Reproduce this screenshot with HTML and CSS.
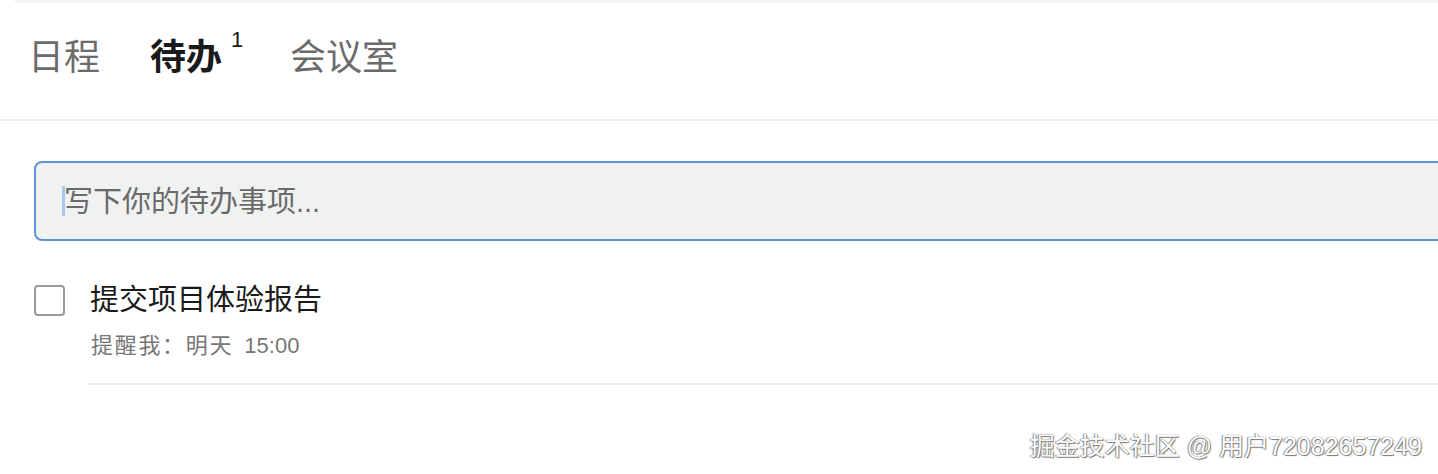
FILE: index.html
```html
<!DOCTYPE html>
<html lang="zh-CN">
<head>
<meta charset="utf-8">
<link rel="stylesheet" href="styles.css">
</head>
<body>
<div class="page">
  <div class="topbar"></div>
  <header class="tabs">
    <div class="tab">日程</div>
    <div class="tab active">待办<sup class="badge">1</sup></div>
    <div class="tab">会议室</div>
  </header>
  <main class="content">
    <div class="input-box">
      <span class="caret"></span>
      <span class="placeholder">写下你的待办事项...</span>
    </div>
    <div class="todo">
      <div class="checkbox"></div>
      <div class="todo-body">
        <div class="todo-title">提交项目体验报告</div>
        <div class="todo-sub"><span class="sub-label">提醒我：明天</span> 15:00</div>
      </div>
    </div>
  </main>
  <div class="watermark">掘金技术社区 @ 用户72082657249</div>
</div>
</body>
</html>
```
FILE: styles.css
```css
html, body {
  margin: 0;
  padding: 0;
  background: #ffffff;
}
body {
  font-family: "Liberation Sans", "Noto Sans CJK SC", sans-serif;
  overflow: hidden;
  width: 1438px;
  height: 474px;
}
.page {
  position: relative;
  width: 1438px;
  height: 474px;
  overflow: hidden;
}
.topbar {
  height: 3px;
  margin-left: 15px;
  background: #f3f3f3;
}
.tabs {
  display: flex;
  align-items: center;
  height: 116px;
  padding-left: 28px;
  border-bottom: 2px solid #ededed;
}
.tab {
  font-size: 36px;
  line-height: 44px;
  color: #6b6b6b;
  margin-right: 50px;
  position: relative;
  margin-top: -6px;
}
.tab.active {
  color: #1a1a1a;
  font-weight: 700;
  margin-right: 68px;
}
.badge {
  position: absolute;
  left: 81px;
  top: -8px;
  font-size: 22px;
  line-height: 24px;
  font-weight: 400;
  color: #1a1a1a;
  vertical-align: baseline;
}
.content {
  padding: 40px 0 0 34px;
}
.input-box {
  display: flex;
  align-items: center;
  height: 76px;
  margin-right: -30px;
  border: 2px solid #5f93d3;
  border-radius: 8px;
  background: #f0f1f1;
  padding-left: 26px;
}
.caret {
  width: 3px;
  height: 30px;
  background: #a9c6ec;
  margin-right: 0;
}
.placeholder {
  font-size: 29px;
  line-height: 36px;
  color: #6a6a6a;
  margin-top: 1px;
  margin-left: -1px;
}
.todo {
  display: flex;
  margin-top: 42px;
}
.checkbox {
  width: 27px;
  height: 27px;
  border: 2px solid #9a9a9a;
  border-radius: 4px;
  flex: none;
  margin-top: 2px;
  margin-right: 23px;
}
.todo-title {
  font-size: 29px;
  line-height: 34px;
  color: #1a1a1a;
  margin-left: 2px;
}
.todo-body {
  flex: 1;
  border-bottom: 2px solid #ececec;
  padding-bottom: 23px;
}
.todo-sub {
  font-size: 22px;
  line-height: 28px;
  color: #777777;
  margin-top: 15px;
  margin-left: 3px;
}
.sub-label {
  letter-spacing: 1.7px;
  margin-right: 5px;
}
.watermark {
  position: absolute;
  right: 16px;
  bottom: 12px;
  font-size: 25px;
  line-height: 32px;
  color: #ffffff;
  text-shadow: 0 0 1px #6a6a6a, 1px 1px 1px #7a7a7a, -1px 0 1px #999999;
}
```
